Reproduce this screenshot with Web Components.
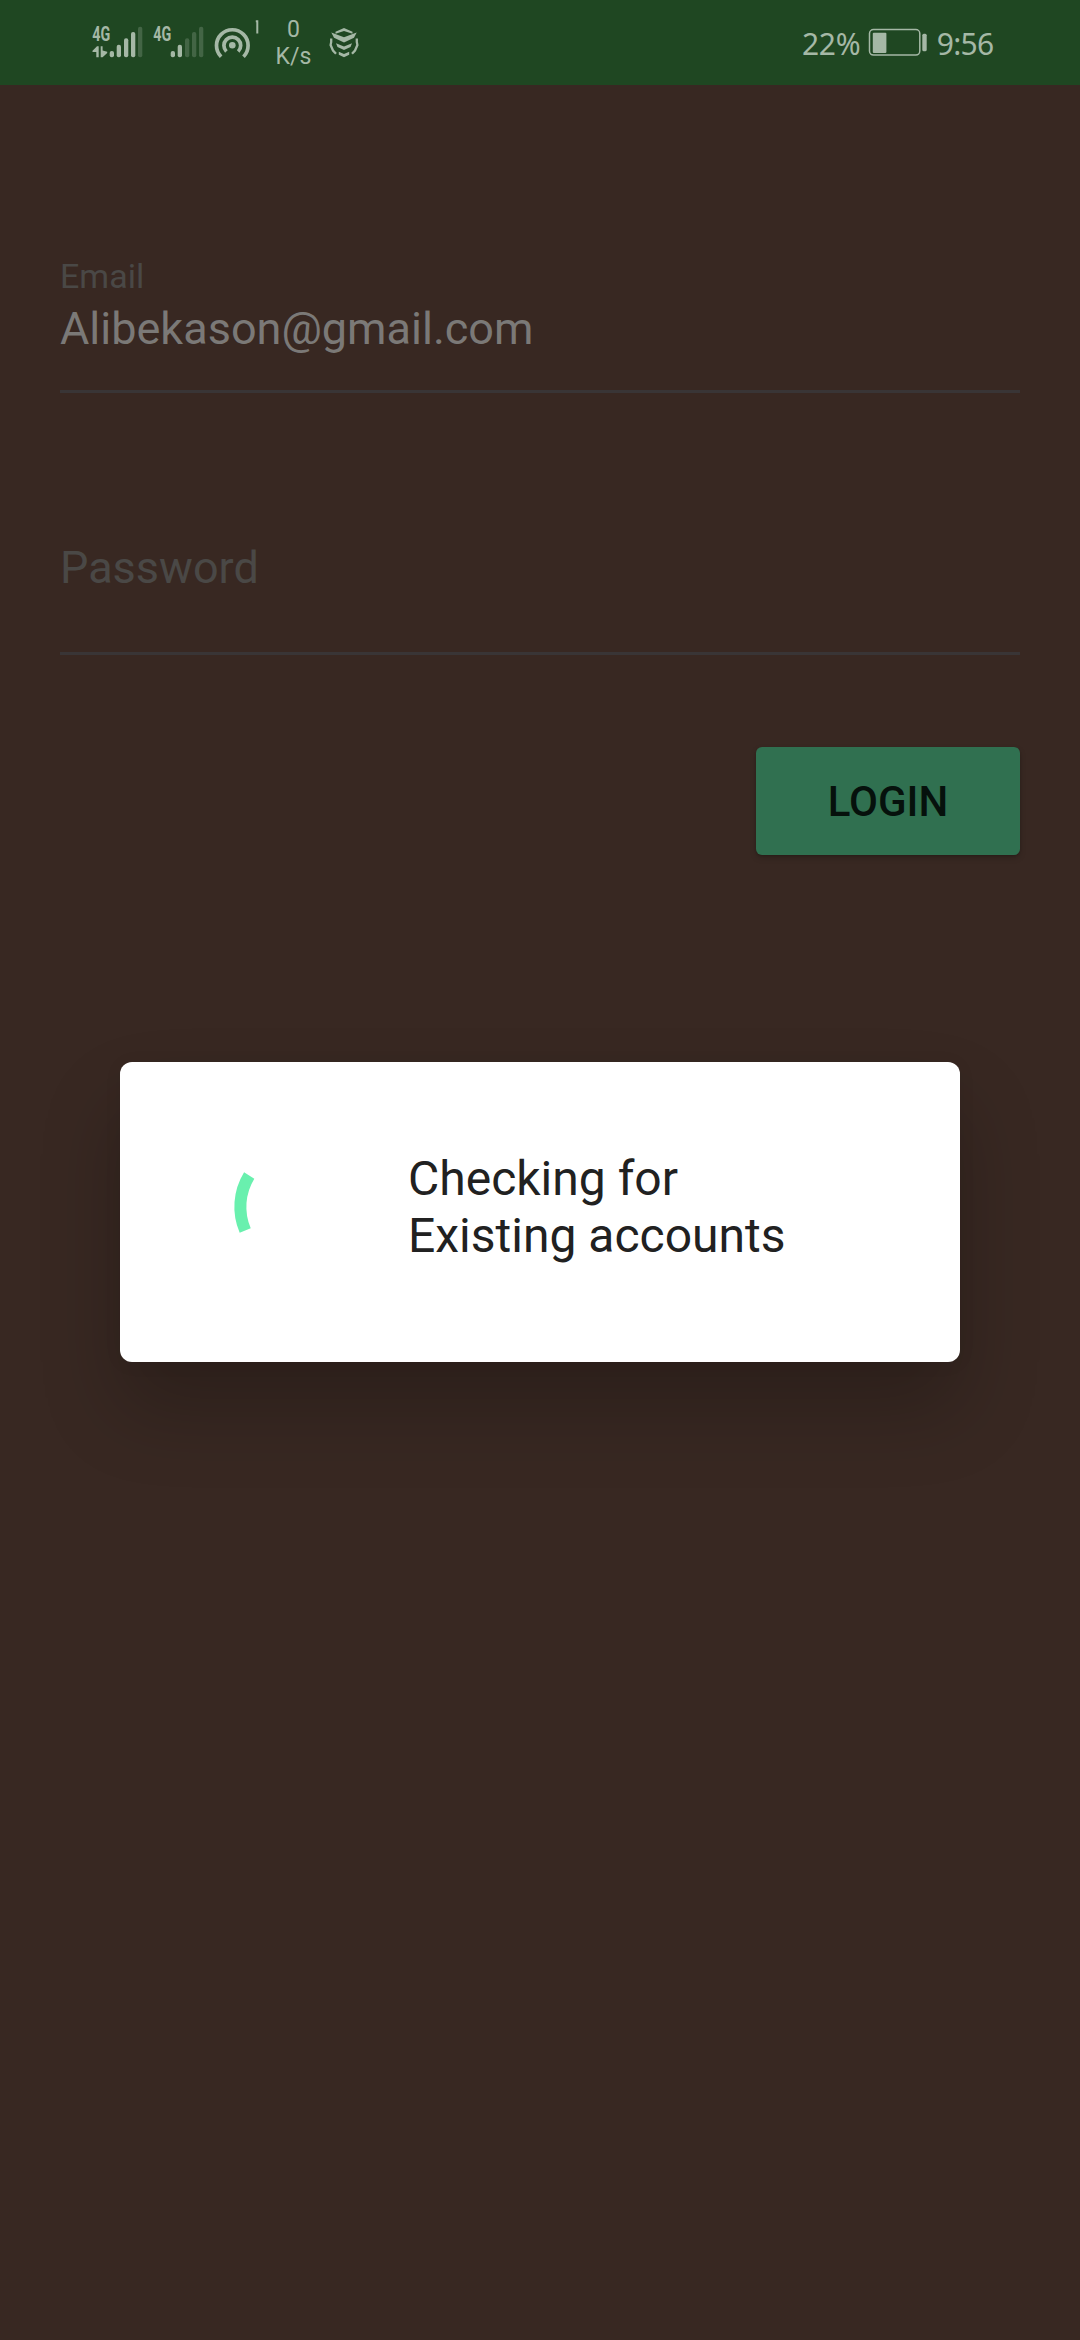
<!DOCTYPE html>
<html lang="en">
<head>
<meta charset="utf-8">
<title>Login</title>
<style>
html,body{margin:0;padding:0;background:#382822}
body{font-family:Roboto,"Liberation Sans",sans-serif;width:1080px;height:2340px;overflow:hidden}
</style>
</head>
<body>
<login-screen></login-screen>
<script>
const define = (name, html) => {
  const t = document.createElement('template');
  t.innerHTML = html;
  customElements.define(name, class extends HTMLElement {
    constructor() {
      super();
      this.attachShadow({ mode: 'open' }).append(t.content.cloneNode(true));
    }
  });
};

/* Cellular strength: "level" lit bars out of five, "data" adds the traffic arrows */
customElements.define('signal-icon', class extends HTMLElement {
  connectedCallback() {
    const level = +this.getAttribute('level');
    const bars = [[17.7, 24], [24.7, 17.7], [32, 11.3], [39, 5], [46, -0.3]].map(([x, y], i) =>
      `<rect x="${x}" y="${y + 1}" width="4.3" height="${30.3 - y}" rx="2" opacity="${i < level ? 1 : .27}"/>`).join('');
    const arrows = this.hasAttribute('data')
      ? '<path d="M5 20.3H6.7V31.3H4.3V26H.5V24.8ZM8.7 20.3H10.6V24.6L15.2 25.7V27L10.6 31.3H8.7Z"/>' : '';
    this.attachShadow({ mode: 'open' }).innerHTML =
      `<style>:host{display:block;width:51px;height:34px}svg{display:block;overflow:visible}text{font:700 19.500px Roboto,sans-serif}</style>
      <svg width="51" height="34" fill="currentColor"><text x="0.3" y="14.600" textLength="18" lengthAdjust="spacingAndGlyphs">4G</text>${arrows}${bars}</svg>`;
  }
});

define('hotspot-icon', `<style>:host{display:block}svg{display:block}</style>
<svg width="46" height="40" fill="none" stroke="currentColor" stroke-width="3.7">
<path d="M7.1 36.7A15.8 15.8 0 1 1 29.5 36.7M12.4 31.5A8.4 8.4 0 1 1 24.2 31.5"/>
<circle cx="18.3" cy="25.2" r="3.3" fill="currentColor" stroke="none"/>
<path d="M41.800 1.300H43.300V13.500" stroke-width="2"/></svg>`);

define('stack-icon', `<style>:host{display:block}svg{display:block}</style>
<svg width="32" height="32" fill="currentColor">
<path d="M16 .9L24.500 4.700V6.700L16 3.900L7.500 6.700V4.700Z"/>
<path d="M3.300 5.500L16 10.300L28.700 5.500L26 10.800L16 15.600L6 10.800Z"/>
<path d="M8 16.300L16 19.500L24 16.300L22.500 20L16 23L9.500 20Z"/>
<path d="M10.800 24.800L16 27L21.200 24.800V27.800L16 30.300L10.800 27.800Z"/>
<path d="M3.200 11.500V15L2.600 18L5 23.500L8 26.800" fill="none" stroke="currentColor" stroke-width="2.300"/>
<path d="M28.800 11.500V15L29.400 18L27 23.500L24 26.800" fill="none" stroke="currentColor" stroke-width="2.300"/></svg>`);

define('battery-icon', `<style>:host{display:block}svg{display:block}</style>
<svg width="60" height="30" fill="currentColor"><rect x="1.500" y="1.600" width="50.300" height="25.500" rx="4" fill="none" stroke="currentColor" stroke-width="1.500"/>
<rect x="4.800" y="4.700" width="13.600" height="20.300" rx="1"/><rect x="54.300" y="5.700" width="4.400" height="17.600" rx="1.500"/></svg>`);

define('status-bar', `<style>
:host{display:flex;box-sizing:border-box;height:85px;padding:0 86.500px 0 92px;background:#1f4722;color:#a5b8a6;align-items:flex-start}
signal-icon{margin-top:26px}
signal-icon+signal-icon{margin-left:10px}
hotspot-icon{margin:19.500px 0 0 10px}
.rate{margin:17px 0 0 13.500px;width:40px;text-align:center;font-size:23px;line-height:26.700px}
stack-icon{margin:27px 0 0 14px}
.end{margin-left:auto;display:flex;font:30px "Noto Sans","Open Sans",sans-serif;line-height:40px}
.end span{margin-top:24px;white-space:nowrap}
.pct{letter-spacing:-.3px}
battery-icon{margin:28px 8.500px 0 8px}
.time{letter-spacing:-.7px}
</style>
<signal-icon level="4" data></signal-icon><signal-icon level="2"></signal-icon>
<hotspot-icon></hotspot-icon><div class="rate">0<br>K/s</div><stack-icon></stack-icon>
<div class="end"><span class="pct">22%</span><battery-icon></battery-icon><span class="time">9:56</span></div>`);

define('text-field', `<style>
:host{display:flex;flex-direction:column;box-sizing:border-box;border-bottom:3px solid #393536;color:#4a4846;font-size:45px;line-height:53px}
::slotted([slot=label]){font-size:34px;line-height:40px;margin-bottom:6px}
</style><slot name="label"></slot><slot></slot>`);

define('raised-button', `<style>
:host{display:flex;align-items:center;justify-content:center;box-sizing:border-box;width:264px;height:108px;padding-top:2px;border-radius:6px;background:#307050;color:#06110c;
font-size:42px;font-weight:500;line-height:50px;box-shadow:0 3px 6px rgba(0,0,0,.18),0 1px 2px rgba(0,0,0,.15)}
</style><slot></slot>`);

define('progress-dialog', `<style>
:host{display:flex;box-sizing:border-box;width:840px;height:300px;padding:66px 72px 0 108px;border-radius:12px;background:#fff;color:#212121;
font-size:48px;line-height:57px;box-shadow:0 46px 80px rgba(0,0,0,.22),0 2px 18px rgba(0,0,0,.06)}
svg{display:block;flex:none;margin-right:24px}
div{margin-top:22px}
</style>
<svg width="156" height="160" fill="none" stroke="#69f0ae" stroke-width="12"><path d="M21.200 47.500A60 60 0 0 0 17.200 102.500"/></svg>
<div><slot></slot></div>`);

define('login-screen', `<style>
:host{display:block;position:relative;width:1080px;height:2340px;background:#382822;overflow:hidden}
main{display:flex;flex-direction:column;padding:171px 60px 0}
.email{height:137px;border-bottom-width:3px}
.value{color:#7b7977}
.password{height:114px;margin-top:148px}
raised-button{align-self:flex-end;margin-top:91.500px}
progress-dialog{position:absolute;left:120px;top:1062.300px}
</style>
<status-bar></status-bar>
<main>
<text-field class="email"><span slot="label">Email</span><span class="value">Alibekason@gmail.com</span></text-field>
<text-field class="password"><span>Password</span></text-field>
<raised-button>LOGIN</raised-button>
</main>
<progress-dialog>Checking for<br>Existing accounts</progress-dialog>`);
</script>
</body>
</html>
